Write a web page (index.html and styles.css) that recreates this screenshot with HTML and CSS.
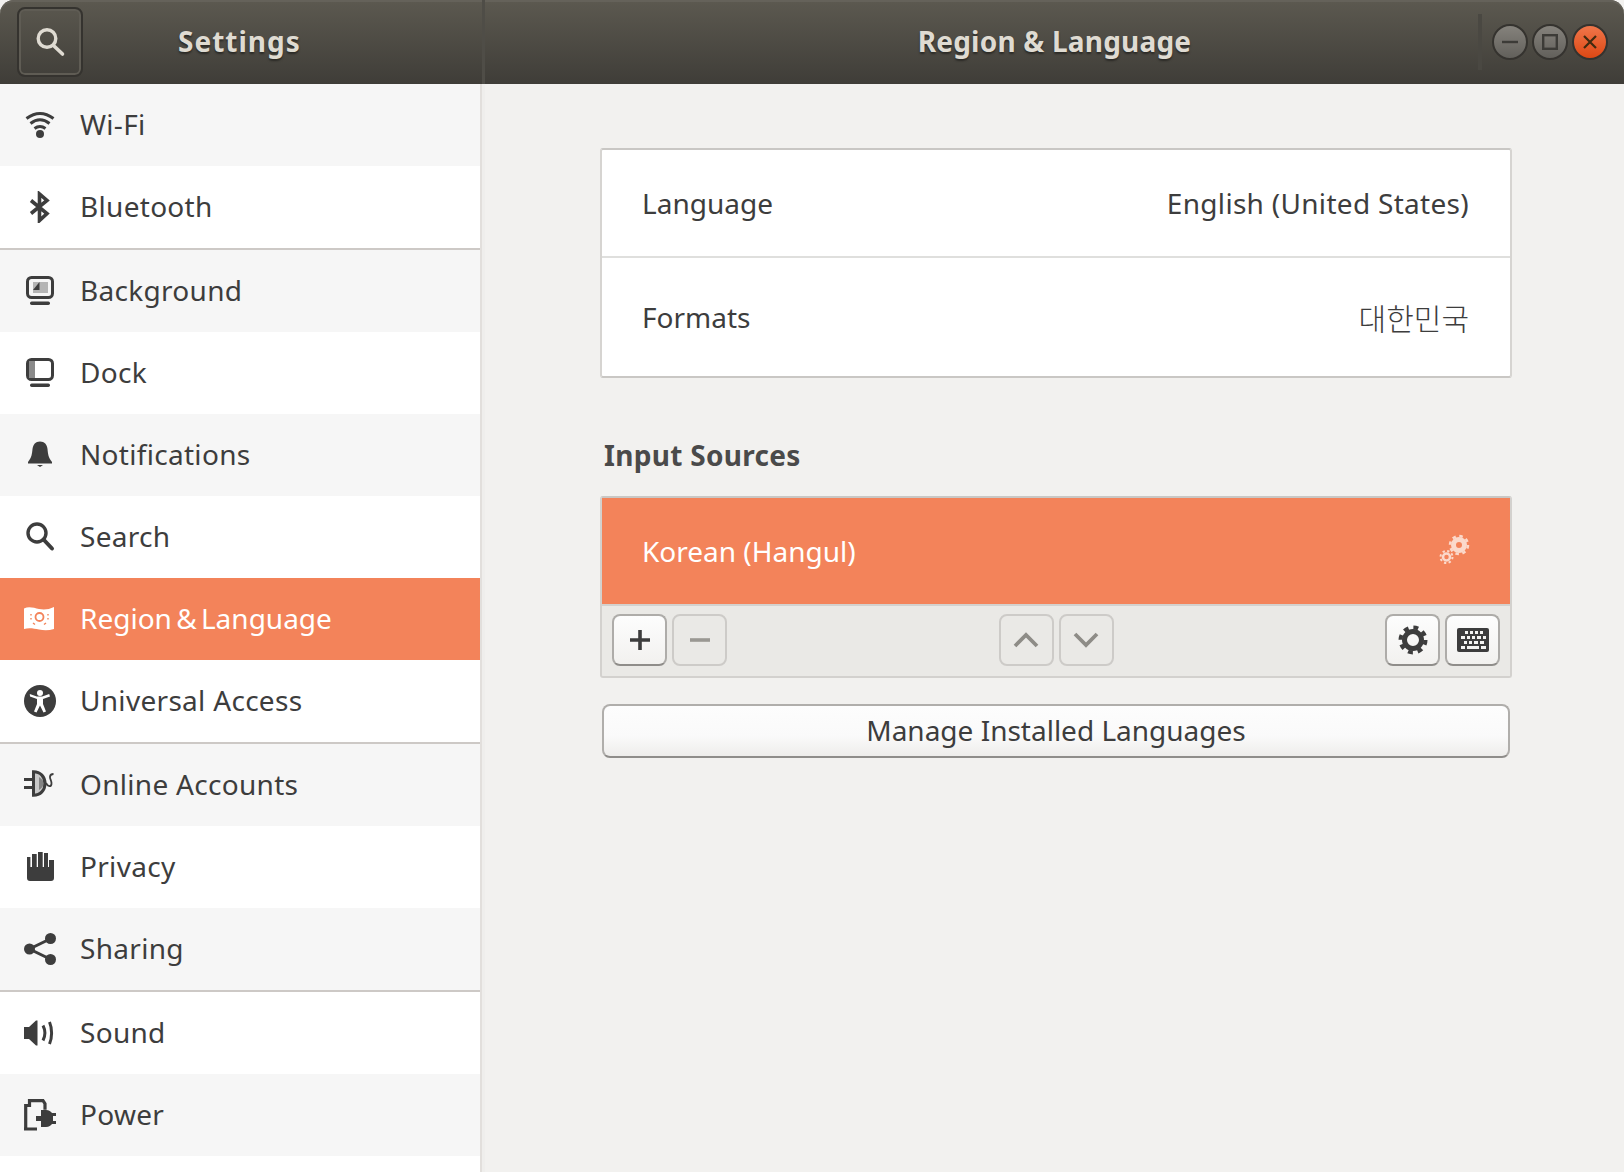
FILE: index.html
```html
<!DOCTYPE html>
<html lang="en">
<head>
    <meta charset="UTF-8">
    <title>Settings</title>
    <link rel="stylesheet" href="styles.css">
</head>
<body>
    <div class="window">
        <header class="titlebar">
            <div class="titlebar-left">
                <button class="search-toggle">
                    <svg width="32" height="32" viewBox="0 0 32 32"><circle cx="13" cy="12.500" r="8.800" fill="none" stroke="#dfdbd2" stroke-width="3.400"/><path d="M19.500 19.500l9 8.500" stroke="#dfdbd2" stroke-width="3.600" stroke-linecap="round"/></svg>
                </button>
                <span class="title title-settings">Settings</span>
            </div>
            <div class="titlebar-right">
                <span class="title title-page">Region &amp; Language</span>
                <div class="window-controls">
                    <span class="win-btn"><svg width="20" height="20" viewBox="0 0 20 20"><path d="M2 10h16" stroke="#3c3b37" stroke-width="2.400"/></svg></span>
                    <span class="win-btn"><svg width="20" height="20" viewBox="0 0 20 20"><rect x="3.200" y="3.200" width="13.600" height="13.600" fill="none" stroke="#3c3b37" stroke-width="2.400"/></svg></span>
                    <span class="win-btn win-close"><svg width="20" height="20" viewBox="0 0 20 20"><path d="M4 4l12 12M16 4L4 16" stroke="#3f2a10" stroke-width="2.200"/></svg></span>
                </div>
            </div>
        </header>

        <div class="panes">
            <ul class="sidebar">
                <li class="row even">
                    <svg class="icon" viewBox="0 0 32 32"><g fill="none" stroke="#3d3d3d" stroke-width="3"><path d="M2.500 9.500Q16 -.5 29.500 9.500"/><path d="M6.500 14.500Q16 7 25.500 14.500"/><path d="M10.500 19.500Q16 15.500 21.500 19.500"/></g><circle cx="16" cy="25" r="4" fill="#3d3d3d"/></svg>
                    Wi-Fi
                </li>
                <li class="row sep">
                    <svg class="icon" viewBox="0 0 32 32"><path d="M7 9.500l16 13-7.500 7V3l7.500 6.500-16 13" fill="none" stroke="#3d3d3d" stroke-width="3.600"/></svg>
                    Bluetooth
                </li>
                <li class="row even">
                    <svg class="icon" viewBox="0 0 32 32"><rect x="3.500" y="2.500" width="25" height="20" rx="4" fill="none" stroke="#3d3d3d" stroke-width="3"/><path d="M9 7h15v11H9z" fill="#b5b5b5"/><path d="M9 15l6.500-8v8z" fill="#3d3d3d"/><rect x="6" y="26.500" width="20" height="3.500" rx="1.700" fill="#3d3d3d"/></svg>
                    Background
                </li>
                <li class="row">
                    <svg class="icon" viewBox="0 0 32 32"><rect x="3.500" y="2.500" width="25" height="20" rx="4" fill="none" stroke="#3d3d3d" stroke-width="3"/><path d="M5 4h6v17H5z" fill="#8a8a8a"/><rect x="6" y="26.500" width="20" height="3.500" rx="1.700" fill="#3d3d3d"/></svg>
                    Dock
                </li>
                <li class="row even">
                    <svg class="icon" viewBox="0 0 32 32"><path d="M16 2.500c-4.500 0-7 3-7.500 7.500-.5 5-.8 8.500-4.500 13v1.500h24V23c-3.700-4.500-4-8-4.500-13-.5-4.500-3-7.500-7.500-7.500z" fill="#3d3d3d"/><path d="M13 26h6l-3 2z" fill="#3d3d3d"/></svg>
                    Notifications
                </li>
                <li class="row">
                    <svg class="icon" viewBox="0 0 32 32"><circle cx="13" cy="12" r="9" fill="none" stroke="#3d3d3d" stroke-width="3.400"/><path d="M19.500 18.500l8.500 9" stroke="#3d3d3d" stroke-width="4" stroke-linecap="round"/></svg>
                    Search
                </li>
                <li class="row active">
                    <svg class="icon" viewBox="0 0 32 32"><path d="M0 5.500c5-2.500 10-.5 15 .5 5 1 10 .5 15-2v22c-5 1.500-10 1.500-15 .5-5-1-10-2-15-.5z" fill="#fff"/><circle cx="15.500" cy="14" r="4" fill="none" stroke="#f3835a" stroke-width="1.800"/><path d="M7 11v1.500M7 15v1.500M24 11v1.500M24 15v1.500M9 20l2 1.500M22 20l-2 1.500" stroke="#f3835a" stroke-width="1.400"/></svg>
                    Region &amp; Language
                </li>
                <li class="row sep">
                    <svg class="icon" viewBox="0 0 32 32"><circle cx="16" cy="16" r="16" fill="#3d3d3d"/><circle cx="16" cy="8" r="3" fill="#fff"/><path d="M6 11.500l7 2.500v5l-3 7.500 2.500 1 3.500-7 3.500 7 2.500-1-3-7.500v-5l7-2.500-.8-2.500-7 2.500h-5.400l-7-2.500z" fill="#fff"/></svg>
                    Universal Access
                </li>
                <li class="row even">
                    <svg class="icon" viewBox="0 0 32 32"><path d="M9.500 2.800c7 0 11.500 5 11.500 11.700s-4.500 11.700-11.500 11.700z" fill="#c9c9c9" stroke="#3d3d3d" stroke-width="3"/><path d="M15 8c3 2 4.500 4 4.500 6.500S18 19 15 21z" fill="#3d3d3d" opacity=".5"/><path d="M0 9h9v3H0zM0 17h9v3H0z" fill="#3d3d3d"/><path d="M22 14c2 4 5 4 5.500 1 .5-3-2-5-1.500-7.500.3-1.500 1.500-2.500 3.500-2.500" fill="none" stroke="#3d3d3d" stroke-width="1.800"/></svg>
                    Online Accounts
                </li>
                <li class="row">
                    <svg class="icon" viewBox="0 0 32 32"><path d="M3 6h3.400v10H8V3h4.700v13H14V1h4.700v15H20V2h4v14h1V9h5v18c0 2-1 3-3 3H6c-2 0-3-1-3-3z" fill="#3d3d3d"/></svg>
                    Privacy
                </li>
                <li class="row even sep">
                    <svg class="icon" viewBox="0 0 32 32"><path d="M27 5.500L5.500 16 27 26.500" fill="none" stroke="#3d3d3d" stroke-width="3"/><circle cx="5.500" cy="16" r="5.500" fill="#3d3d3d"/><circle cx="26.500" cy="5.500" r="5.500" fill="#3d3d3d"/><circle cx="26.500" cy="26.500" r="5.500" fill="#3d3d3d"/></svg>
                    Sharing
                </li>
                <li class="row">
                    <svg class="icon" viewBox="0 0 32 32"><path d="M0 10h5l7-6.500h1.500v25H12L5 22H0z" fill="#3d3d3d"/><path d="M19 8.500c2.300 4.500 2.300 10.500 0 15M25.500 5c2.800 6.500 2.800 15.500 0 22" fill="none" stroke="#3d3d3d" stroke-width="3"/></svg>
                    Sound
                </li>
                <li class="row even">
                    <svg class="icon" viewBox="0 0 32 32"><path d="M1.700 30V6.500H5.500V1.700h13.500l2 3v6" fill="none" stroke="#3d3d3d" stroke-width="3.200"/><path d="M0 28.500h13v3H0z" fill="#3d3d3d"/><path d="M17 11h5c3 0 5 1.500 6 3h4v3h-3v5h3v3h-4c-1 1.500-3 3-6 3h-5v-6h-5v-5h5z" fill="#3d3d3d"/></svg>
                    Power
                </li>
            </ul>

            <main class="content">
                <section class="card">
                    <div class="card-row"><span>Language</span><span class="value">English (United States)</span></div>
                    <div class="card-row card-row-last"><span>Formats</span><span class="korean">대한민국</span></div>
                </section>

                <h3 class="section-title">Input Sources</h3>

                <section class="sources">
                    <div class="source-row">
                        <span>Korean (Hangul)</span>
                        <svg class="gears" width="32" height="32" viewBox="0 0 32 32">
                            <g fill="none" stroke="#fbd9cb">
                                <circle cx="20" cy="11" r="5.500" stroke-width="5"/>
                                <circle cx="20" cy="11" r="9" stroke-width="2.500" stroke-dasharray="3.500 3.570"/>
                                <circle cx="7.500" cy="23" r="3.500" stroke-width="2.500"/>
                                <circle cx="7.500" cy="23" r="6" stroke-width="2" stroke-dasharray="2.300 2.410"/>
                            </g>
                        </svg>
                    </div>
                    <div class="toolbar">
                        <div class="btn-group">
                            <button class="tool-btn"><svg width="24" height="24" viewBox="0 0 24 24"><path d="M12 2v20M2 12h20" stroke="#3d3d3d" stroke-width="3.600"/></svg></button>
                            <button class="tool-btn off"><svg width="24" height="24" viewBox="0 0 24 24"><path d="M2 12h20" stroke="#9a9893" stroke-width="3.600"/></svg></button>
                        </div>
                        <div class="btn-group">
                            <button class="tool-btn off"><svg width="26" height="26" viewBox="0 0 26 26"><path d="M2 19l11-11 11 11" fill="none" stroke="#8e8c87" stroke-width="3.800"/></svg></button>
                            <button class="tool-btn off"><svg width="26" height="26" viewBox="0 0 26 26"><path d="M2 7l11 11 11-11" fill="none" stroke="#8e8c87" stroke-width="3.800"/></svg></button>
                        </div>
                        <div class="btn-group">
                            <button class="tool-btn"><svg width="30" height="30" viewBox="0 0 30 30"><g fill="none" stroke="#3d3d3d"><circle cx="15" cy="15" r="8.500" stroke-width="5"/><circle cx="15" cy="15" r="12.500" stroke-width="4" stroke-dasharray="4.900 4.920"/></g></svg></button>
                            <button class="tool-btn"><svg width="32" height="26" viewBox="0 0 32 26"><rect width="32" height="24" y="1" rx="2" fill="#3d3d3d"/><path d="M8 4h3v3H8zM13 4h3v3h-3zM18 4h3v3h-3zM23 4h3v3h-3zM4 9h4v3H4zM10 9h3v3h-3zM15 9h3v3h-3zM20 9h4v3h-4zM26 9h3v3h-3zM4 19h4v3H4zM10 19h12v3H10zM24 19h5v3h-5zM7 14h3v3H7zM12 14h3v3h-3zM17 14h4v3h-4zM23 14h4v3h-4z" fill="#f4f4f2"/></svg></button>
                        </div>
                    </div>
                </section>

                <button class="manage-btn">Manage Installed Languages</button>
            </main>
        </div>
    </div>
</body>
</html>
```

FILE: styles.css
```css
body {
    margin: 0;
    background-color: #f2f1ef;
    font-family: "Noto Sans", "Noto Sans CJK KR", sans-serif;
    font-size: 28px;
    color: #3d3d3d;
}
.window {
    height: 1172px;
    overflow: hidden;
    display: flex;
    flex-direction: column;
}

/* title bar */
.titlebar {
    height: 84px;
    flex-shrink: 0;
    display: flex;
    background: linear-gradient(#5c5950, #3f3d38);
    border-radius: 14px 14px 0 0;
    box-shadow: inset 0 2px 0 #65625a;
}
.titlebar-left {
    width: 485px;
    flex-shrink: 0;
    box-sizing: border-box;
    padding-left: 17px;
    display: flex;
    align-items: center;
    border-right: 3px solid #4f4d47;
}
.search-toggle {
    width: 66px;
    height: 70px;
    padding: 0;
    display: flex;
    align-items: center;
    justify-content: center;
    background: transparent;
    border: 2px solid #35332f;
    border-radius: 8px;
    box-shadow: inset 0 0 0 2px #5f5c54;
}
.title {
    font-weight: 700;
    color: #dfdbd2;
    text-shadow: 0 2px 2px #2b2a26;
    padding-bottom: 2px;
}
.title-settings {
    margin-left: 95px;
    letter-spacing: 1px;
}
.title-page {
    letter-spacing: 0.2px;
}
.titlebar-right {
    flex: 1;
    display: flex;
    align-items: center;
    justify-content: center;
    position: relative;
}
.window-controls {
    position: absolute;
    right: 16px;
    top: 14px;
    height: 56px;
    display: flex;
    align-items: center;
    gap: 4px;
    padding-left: 10px;
    border-left: 4px solid #4a4842;
}
.win-btn {
    width: 32px;
    height: 32px;
    border: 2px solid #35332f;
    border-radius: 50%;
    background: linear-gradient(#85827c, #62605b);
    display: flex;
    align-items: center;
    justify-content: center;
}
.win-close {
    background: linear-gradient(#f0764a, #dd4814);
}

.panes {
    flex: 1;
    display: flex;
    min-height: 0;
}

/* sidebar */
.sidebar {
    width: 480px;
    flex-shrink: 0;
    margin: 0;
    padding: 0;
    list-style: none;
    background-color: #fff;
    border-right: 2px solid #e2dfdc;
    box-shadow: 3px 0 0 #efeeec;
}
.row {
    height: 80px;
    padding: 0 0 2px 24px;
    display: flex;
    align-items: center;
    letter-spacing: 0.3px;
    background-color: #fff;
}
.row.even {
    background-color: #f6f6f6;
}
.row.sep {
    border-bottom: 2px solid #cdc9c6;
}
.row.active {
    background-color: #f3835a;
    color: #fff;
    letter-spacing: 0;
    word-spacing: -3px;
}
.icon {
    width: 32px;
    height: 32px;
    margin: 2px 24px 0 0;
    flex-shrink: 0;
}

/* right side */
.content {
    flex: 1;
    padding: 64px 0 0 118px;
}
.card {
    width: 908px;
    background-color: #fff;
    border: 2px solid #c9c7c4;
    border-left-color: #d6d4d1;
    border-right-color: #d6d4d1;
    border-radius: 3px;
}
.card-row {
    height: 108px;
    box-sizing: border-box;
    padding: 0 41px 0 40px;
    display: flex;
    align-items: center;
    justify-content: space-between;
    border-bottom: 2px solid #dfdfdd;
}
.card-row-last {
    height: 118px;
    border-bottom: none;
}
.value {
    letter-spacing: 0.3px;
}
.korean {
    font-family: "Noto Sans CJK KR", sans-serif;
    font-size: 30px;
    font-weight: 300;
}
.section-title {
    margin: 59px 0 23px 4px;
    height: 36px;
    line-height: 36px;
    font-size: 28px;
    font-weight: 700;
    letter-spacing: 0.3px;
    color: #4a4a4a;
}
.sources {
    width: 908px;
    border: 2px solid #d3d1ce;
    border-top-color: #c9c7c4;
    border-radius: 3px;
    background-color: #eae9e6;
}
.source-row {
    height: 106px;
    box-sizing: border-box;
    padding: 0 39px 0 40px;
    display: flex;
    align-items: center;
    justify-content: space-between;
    background-color: #f3835a;
    color: #fff;
}
.gears {
    margin-bottom: 2px;
}
.toolbar {
    height: 72px;
    box-sizing: border-box;
    padding: 8px 10px 0;
    display: flex;
    align-items: flex-start;
    justify-content: space-between;
    border-top: 2px solid #d3d1ce;
}
.btn-group {
    display: flex;
    gap: 5px;
}
.tool-btn {
    width: 55px;
    height: 52px;
    padding: 0;
    display: flex;
    align-items: center;
    justify-content: center;
    background: linear-gradient(#fdfdfd, #f2f1ef);
    border: 2px solid #aeaca9;
    border-bottom-color: #8f8d8a;
    border-radius: 8px;
}
.tool-btn.off {
    background: #eae9e6;
    border-color: #cdcbc8;
}
.manage-btn {
    display: block;
    width: 908px;
    height: 54px;
    margin: 26px 0 0 2px;
    padding: 0 0 2px;
    font-family: inherit;
    font-size: 28px;
    color: #3d3d3d;
    background: linear-gradient(#fdfdfd, #fafafa 60%, #eeedeb);
    border: 2px solid #b0aeab;
    border-bottom-color: #8f8d8a;
    border-radius: 8px;
}
```
